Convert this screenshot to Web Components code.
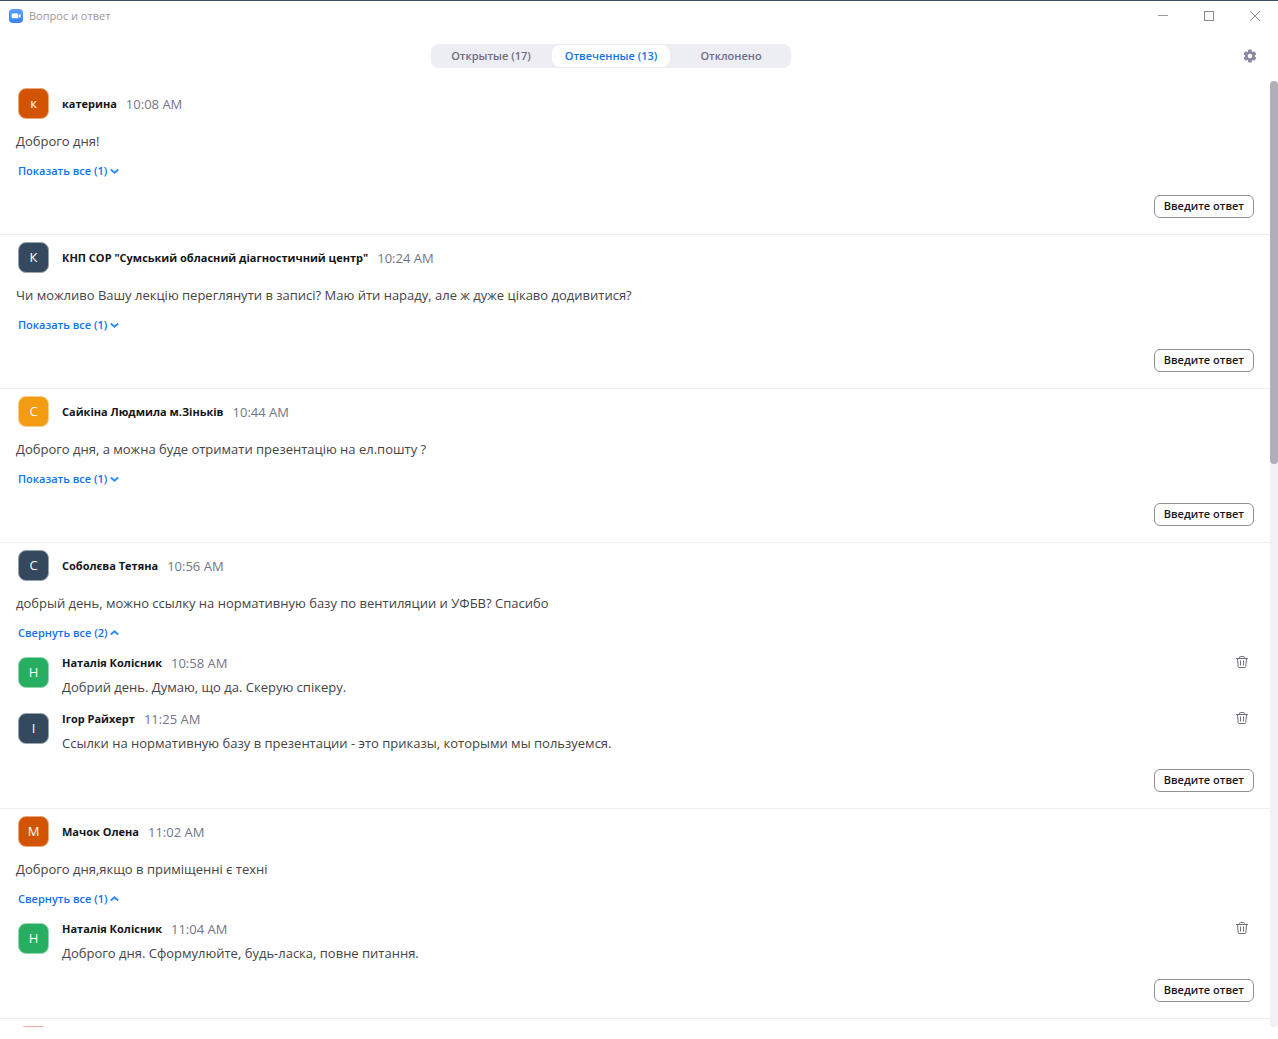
<!DOCTYPE html>
<html lang="ru">
<head>
<meta charset="utf-8">
<meta name="viewport" content="width=device-width, initial-scale=1">
<title>Вопрос и ответ</title>
<style>
  :root {
    --primary-color: #0e72ed;
    --text-color: #131619;
    --body-color: #444447;
    --muted-color: #747487;
    --line-color: #ededf4;
  }

  body {
    margin: 0;
    background: #fff;
    color: var(--text-color);
    font-family: "Open Sans", "Noto Sans", sans-serif;
    font-size: 13px;
    line-height: 20px;
  }
</style>
</head>
<body>
<qa-window>
  <title-bar slot="title">Вопрос и ответ</title-bar>
  <tab-bar slot="tabs">
    <tab-item>Открытые (17)</tab-item>
    <tab-item selected>Отвеченные (13)</tab-item>
    <tab-item>Отклонено</tab-item>
  </tab-bar>

  <question-item name="катерина" initial="к" time="10:08 AM" color="#d35400" count="1">Доброго дня!</question-item>
  <question-item name='КНП СОР "Сумський обласний діагностичний центр"' initial="К" time="10:24 AM" color="#34495e" count="1">Чи можливо Вашу лекцію переглянути в записі? Маю йти нараду, але ж дуже цікаво додивитися?</question-item>
  <question-item name="Сайкіна Людмила м.Зіньків" initial="С" time="10:44 AM" color="#f39c12" count="1">Доброго дня, а можна буде отримати презентацію на ел.пошту ?</question-item>
  <question-item name="Соболєва Тетяна" initial="С" time="10:56 AM" color="#34495e" count="2" open>
    добрый день, можно ссылку на нормативную базу по вентиляции и УФБВ? Спасибо
    <reply-item slot="replies" name="Наталія Колісник" initial="Н" time="10:58 AM" color="#27ae60">Добрий день. Думаю, що да. Скерую спікеру.</reply-item>
    <reply-item slot="replies" name="Ігор Райхерт" initial="І" time="11:25 AM" color="#34495e">Ссылки на нормативную базу в презентации - это приказы, которыми мы пользуемся.</reply-item>
  </question-item>
  <question-item name="Мачок Олена" initial="М" time="11:02 AM" color="#d35400" count="1" open>
    Доброго дня,якщо в приміщенні є техні
    <reply-item slot="replies" name="Наталія Колісник" initial="Н" time="11:04 AM" color="#27ae60">Доброго дня. Сформулюйте, будь-ласка, повне питання.</reply-item>
  </question-item>
  <question-item color="#e74c3c"></question-item>
</qa-window>

<script>
const escapeHtml = (text) =>
  (text || "").replace(/&/g, "&amp;").replace(/"/g, "&quot;").replace(/</g, "&lt;");

class BaseElement extends HTMLElement {
  constructor() {
    super();
    this.attachShadow({ mode: "open" });
  }

  connectedCallback() {
    this.render();
  }

  render() {
    const template = document.createElement("template");
    template.innerHTML = this.html();
    this.shadowRoot.innerHTML = "";
    this.shadowRoot.appendChild(template.content);
  }

  attr(name) {
    return escapeHtml(this.getAttribute(name));
  }
}

class QaWindow extends BaseElement {
  connectedCallback() {
    super.connectedCallback();
    const list = this.shadowRoot.querySelector("main");
    const thumb = this.shadowRoot.querySelector(".thumb");
    list.addEventListener("scroll", () => {
      const range = list.scrollHeight - list.clientHeight;
      const free = list.clientHeight - thumb.offsetHeight;
      thumb.style.marginTop = `${range ? (list.scrollTop / range) * free : 0}px`;
    });
  }

  html() {
    return `
      <style>
        :host {
          display: flex;
          flex-direction: column;
          height: 100vh;
          box-sizing: border-box;
          border-top: 1px solid #3a5067;
          padding-bottom: 12px;
        }

        .content {
          display: flex;
          flex: 1;
          min-height: 0;
        }

        main {
          flex: 1;
          min-width: 0;
          overflow-y: auto;
          scrollbar-width: none;
        }

        .track {
          width: 8px;
          border-radius: 4px;
          background: #f1f1f7;
        }

        .thumb {
          height: 40.5%;
          border-radius: 4px;
          background: #afafb9;
        }
      </style>
      <slot name="title"></slot>
      <slot name="tabs"></slot>
      <div class="content">
        <main><slot></slot></main>
        <div class="track"><div class="thumb"></div></div>
      </div>
    `;
  }
}

class TitleBar extends BaseElement {
  html() {
    return `
      <style>
        :host {
          display: flex;
          align-items: center;
          height: 30px;
          padding-left: 9px;
          color: #999;
          font-size: 11px;
        }

        .title {
          flex: 1;
          margin-left: 6px;
        }

        button {
          display: flex;
          align-items: center;
          justify-content: center;
          width: 46px;
          height: 28px;
          padding: 0;
          border: none;
          background: none;
        }

        svg {
          display: block;
        }
      </style>
      <svg width="14" height="14" viewBox="0 0 14 14">
        <defs>
          <linearGradient id="logo" x1="0" y1="0" x2="0" y2="1">
            <stop offset="0" stop-color="#5aa0ff"/>
            <stop offset="1" stop-color="#3b82f6"/>
          </linearGradient>
        </defs>
        <rect width="14" height="14" rx="4" fill="url(#logo)"/>
        <path d="M2.600 4.500h5.200c.8 0 1.400.6 1.400 1.400v3.400H4C3.200 9.300 2.600 8.700 2.600 8z" fill="#fff"/>
        <path d="M9.600 6.300l2-1.500v4.300l-2-1.400z" fill="#fff"/>
      </svg>
      <span class="title"><slot></slot></span>
      <button aria-label="Свернуть">
        <svg width="10" height="10" viewBox="0 0 10 10"><path d="M0 4.500h10" stroke="#999"/></svg>
      </button>
      <button aria-label="Развернуть">
        <svg width="10" height="10" viewBox="0 0 10 10"><rect x=".5" y=".5" width="9" height="9" fill="none" stroke="#8a8a8a"/></svg>
      </button>
      <button aria-label="Закрыть">
        <svg width="10" height="10" viewBox="0 0 10 10"><path d="M0 0l10 10M10 0L0 10" stroke="#8a8a8a"/></svg>
      </button>
    `;
  }
}

class TabBar extends BaseElement {
  html() {
    return `
      <style>
        :host {
          display: flex;
          align-items: center;
          height: 50px;
        }

        .center {
          display: flex;
          flex: 1;
          justify-content: center;
        }

        .tabs {
          display: flex;
          border-radius: 8px;
          background: #ededf4;
        }

        button {
          display: flex;
          align-items: center;
          justify-content: center;
          width: 56px;
          height: 24px;
          padding: 0;
          border: none;
          background: none;
        }
      </style>
      <div class="center">
        <div class="tabs" role="tablist"><slot></slot></div>
      </div>
      <button aria-label="Настройки">
        <svg width="14" height="14" viewBox="0 0 14 14">
          <g fill="#8a8aa0">
            <rect x="5" y=".6" width="4" height="12.800" rx="1"/>
            <rect x="5" y=".6" width="4" height="12.800" rx="1" transform="rotate(60 7 7)"/>
            <rect x="5" y=".6" width="4" height="12.800" rx="1" transform="rotate(120 7 7)"/>
            <circle cx="7" cy="7" r="4.800"/>
          </g>
          <circle cx="7" cy="7" r="2.300" fill="#fff"/>
        </svg>
      </button>
    `;
  }
}

class TabItem extends BaseElement {
  html() {
    const selected = this.hasAttribute("selected");
    return `
      <style>
        :host {
          display: block;
          width: 120px;
          padding: 1px;
          box-sizing: border-box;
        }

        button {
          display: block;
          width: 100%;
          height: 22px;
          padding: 0;
          border: none;
          border-radius: 8px;
          background: none;
          color: #6e6e85;
          font: 600 11px/22px "Open Sans", "Noto Sans", sans-serif;
          white-space: nowrap;
        }

        button[aria-selected="true"] {
          background: #fff;
          color: var(--primary-color);
        }
      </style>
      <button role="tab" aria-selected="${selected}"><slot></slot></button>
    `;
  }
}

class UserAvatar extends BaseElement {
  html() {
    const color = this.attr("color");
    return `
      <style>
        :host {
          display: block;
          flex: none;
          width: 29px;
          height: 29px;
          border: 1px solid color-mix(in srgb, ${color} 50%, white);
          border-radius: 8px;
          background: ${color};
          color: #fff;
          font-size: 13px;
          line-height: 29px;
          text-align: center;
        }
      </style>
      <slot></slot>
    `;
  }
}

class QuestionItem extends BaseElement {
  connectedCallback() {
    super.connectedCallback();
    this.shadowRoot.addEventListener("click", (event) => {
      if (event.target.closest(".toggle")) {
        this.toggleAttribute("open");
        this.render();
      }
    });
  }

  toggleHtml() {
    const open = this.hasAttribute("open");
    const label = open ? "Свернуть все" : "Показать все";
    const arrow = open ? "M.8 5.400L4.500 2.200L8.200 5.400" : "M.8 2.600L4.500 5.800L8.200 2.600";
    return `
      <button class="toggle" aria-expanded="${open}">
        ${label} (${this.attr("count")})
        <svg width="9" height="8" viewBox="0 0 9 8"><path d="${arrow}" fill="none" stroke="#2d8cff" stroke-width="2"/></svg>
      </button>
    `;
  }

  html() {
    return `
      <style>
        :host {
          display: block;
          padding: 7px 16px 16px;
          border-bottom: 1px solid var(--line-color);
        }

        header {
          display: flex;
          align-items: center;
          padding-left: 2px;
        }

        .name {
          margin-left: 13px;
          font-size: 11px;
          font-weight: 700;
        }

        time {
          margin-left: 9px;
          color: var(--muted-color);
        }

        p {
          margin: 12px 0 10px;
          color: var(--body-color);
        }

        .toggle {
          display: flex;
          align-items: center;
          gap: 3px;
          margin-left: 2px;
          padding: 0;
          border: none;
          background: none;
          color: var(--primary-color);
          font: 600 11px/20px "Open Sans", "Noto Sans", sans-serif;
          cursor: pointer;
        }

        .replies {
          display: none;
          flex-direction: column;
          gap: 12px;
          padding: 10px 0 2px;
        }

        :host([open]) .replies {
          display: flex;
        }

        footer {
          display: flex;
          justify-content: flex-end;
          margin-top: 14px;
        }

        .answer {
          padding: 0 9px 1px;
          border: 1px solid #909096;
          border-radius: 6px;
          background: #fff;
          color: var(--text-color);
          font: 600 11px/20px "Open Sans", "Noto Sans", sans-serif;
        }
      </style>
      <header>
        <user-avatar color="${this.attr("color")}">${this.attr("initial")}</user-avatar>
        ${this.hasAttribute("name") ? `
          <span class="name">${this.attr("name")}</span>
          <time>${this.attr("time")}</time>
        ` : ""}
      </header>
      ${this.hasAttribute("name") ? `
        <p><slot></slot></p>
        ${this.toggleHtml()}
        <div class="replies"><slot name="replies"></slot></div>
        <footer><button class="answer">Введите ответ</button></footer>
      ` : ""}
    `;
  }
}

class ReplyItem extends BaseElement {
  html() {
    return `
      <style>
        :host {
          display: flex;
          padding-left: 2px;
        }

        user-avatar {
          margin-top: 4px;
        }

        .body {
          flex: 1;
          margin-left: 13px;
        }

        .name {
          font-size: 11px;
          font-weight: 700;
        }

        .head {
          display: flex;
          gap: 9px;
        }

        time {
          color: var(--muted-color);
        }

        p {
          margin: 4px 0 0;
          color: var(--body-color);
        }

        button {
          display: flex;
          justify-content: center;
          width: 24px;
          height: 20px;
          padding: 3px 0 0;
          border: none;
          background: none;
        }
      </style>
      <user-avatar color="${this.attr("color")}">${this.attr("initial")}</user-avatar>
      <div class="body">
        <div class="head">
          <span class="name">${this.attr("name")}</span>
          <time>${this.attr("time")}</time>
        </div>
        <p><slot></slot></p>
      </div>
      <button aria-label="Удалить">
        <svg width="12" height="12" viewBox="0 0 12 12" fill="none" stroke="#6e6e78">
          <path d="M0 2.500h12M3.500 2.500V1.500Q3.500 .5 4.500 .5h3Q8.500 .5 8.500 1.500v1"/>
          <path d="M1.500 2.500l.7 8q.1 1 1 1h5.600q.9 0 1-1l.7-8"/>
          <path d="M4.500 4.500v5M7.500 4.500v5"/>
        </svg>
      </button>
    `;
  }
}

window.customElements.define("user-avatar", UserAvatar);
window.customElements.define("title-bar", TitleBar);
window.customElements.define("tab-item", TabItem);
window.customElements.define("tab-bar", TabBar);
window.customElements.define("reply-item", ReplyItem);
window.customElements.define("question-item", QuestionItem);
window.customElements.define("qa-window", QaWindow);
</script>
</body>
</html>
